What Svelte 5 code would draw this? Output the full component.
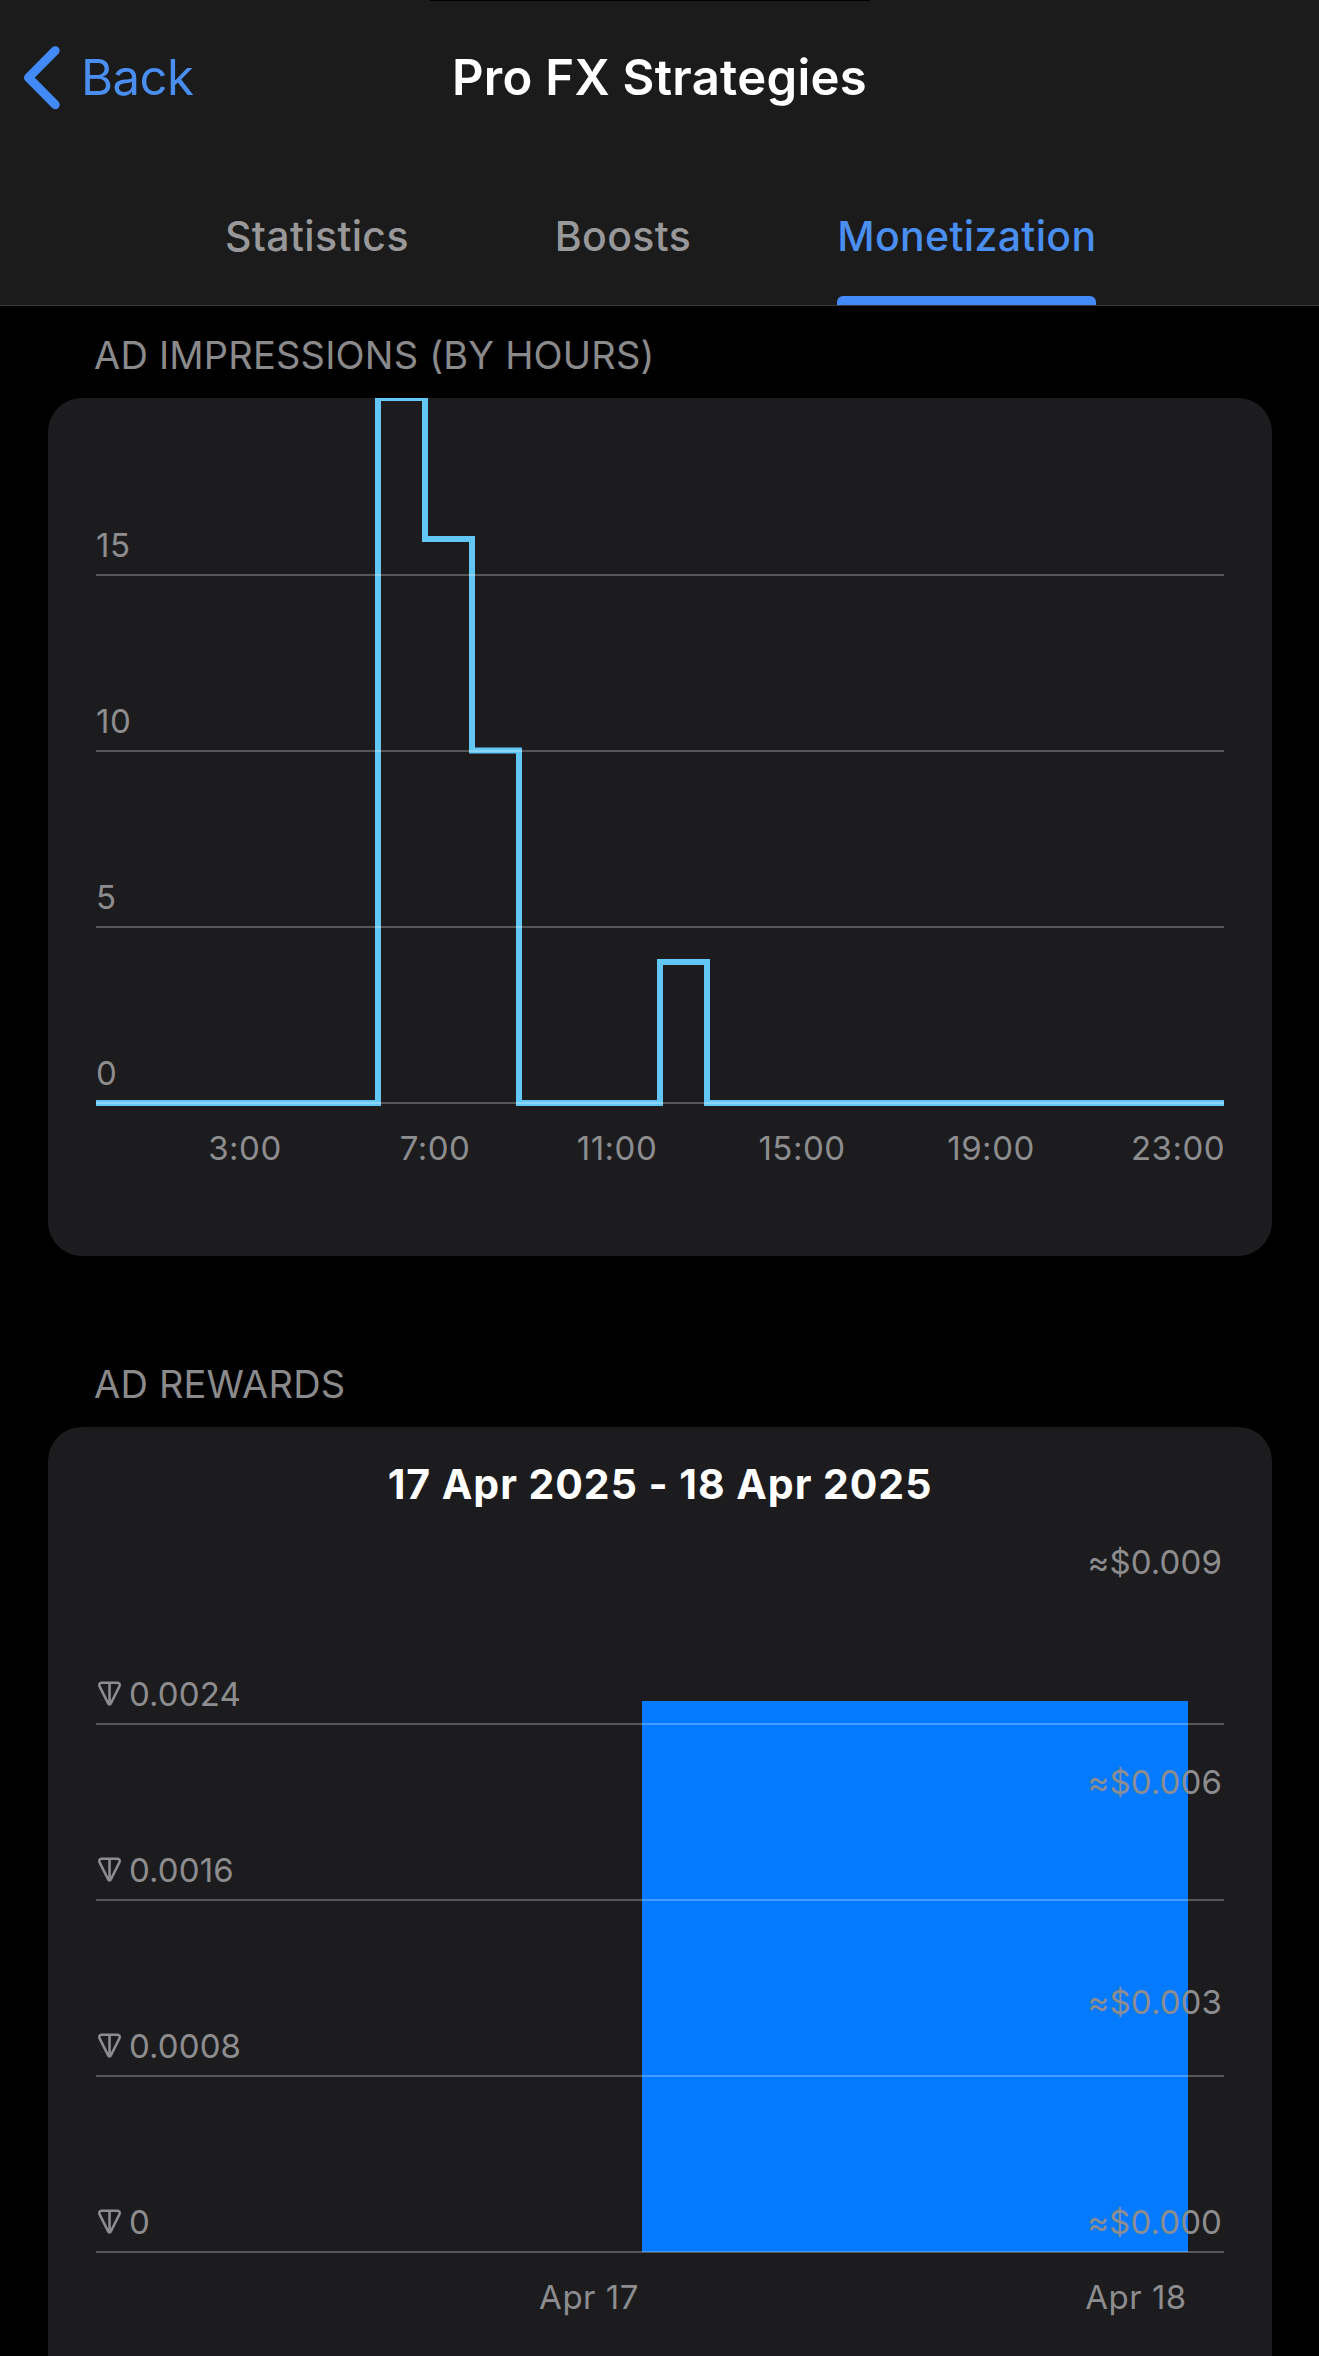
<script lang="ts">
  const tabs = ["Statistics", "Boosts", "Monetization"];
  let active = $state("Monetization");

  // impressions per hour, 0:00 - 23:00
  const hours = [
    0, 0, 0, 0, 0, 0, 20, 16, 10, 0, 0, 0, 4, 0, 0, 0, 0, 0, 0, 0, 0, 0, 0, 0,
  ];
  const hourW = 47;
  const unitH = 35.25;
  const baseY = 705;

  const impressionTicks = [15, 10, 5, 0];
  const hourLabels = [
    { text: "3:00", x: 197 },
    { text: "7:00", x: 387 },
    { text: "11:00", x: 569 },
    { text: "15:00", x: 754 },
    { text: "19:00", x: 943 },
    { text: "23:00", x: 1130 },
  ];

  const tonTicks = ["0.0024", "0.0016", "0.0008", "0"];
  const usdTicks = ["≈$0.009", "≈$0.006", "≈$0.003", "≈$0.000"];

  function stepPath(values: number[]) {
    let d = "";
    values.forEach((v, i) => {
      const y = baseY - v * unitH;
      d += `${i ? "L" : "M"}${48 + i * hourW} ${y}H${48 + (i + 1) * hourW}`;
    });
    return d;
  }
</script>

<div class="screen">
  <header>
    <div class="island"></div>
    <div class="nav">
      <button class="back">
        <svg width="40" height="66" viewBox="0 0 40 66">
          <path d="M33.2 5.7L6.5 32.7L33.2 59.7" />
        </svg>
        <span>Back</span>
      </button>
      <h1>Pro FX Strategies</h1>
    </div>
    <nav class="tabs">
      {#each tabs as tab}
        <button class:active={tab === active} onclick={() => (active = tab)}>
          {tab}
        </button>
      {/each}
    </nav>
  </header>

  <section>
    <h2>AD IMPRESSIONS (BY HOURS)</h2>
    <div class="card">
      <svg class="chart" width="1224" height="858" viewBox="0 0 1224 858">
        <path class="line" d={stepPath(hours)} />
        {#each impressionTicks as tick, i}
          <rect class="grid" x="48" y={176 + i * 176} width="1128" height="2" />
          <text x="48" y={159 + i * 176}>{tick}</text>
        {/each}
        {#each hourLabels as label}
          <text x={label.x} y="762" text-anchor="middle">{label.text}</text>
        {/each}
      </svg>
    </div>
  </section>

  <section class="rewards">
    <h2>AD REWARDS</h2>
    <div class="card">
      <h3>17 Apr 2025 - 18 Apr 2025</h3>
      <svg class="chart" width="1224" height="829" viewBox="0 100 1224 829">
        <rect class="bar" x="594" y="274" width="546" height="551" />
        {#each tonTicks as tick, i}
          <rect class="grid" x="48" y={296 + i * 176} width="1128" height="2" />
          <g class="ton" transform="translate(50 {254.5 + i * 176})">
            <path
              d="M3.6 1.3H19.4C21.3 1.3 22.4 3.2 21.4 4.8L12.8 22C12.2 23.2 10.8 23.2 10.2 22L1.6 4.8C.6 3.2 1.7 1.3 3.6 1.3ZM11.5 1.3V22"
            />
          </g>
          <text class="amount" x="81" y={279 + i * 176}>{tick}</text>
        {/each}
        {#each usdTicks as tick, i}
          <text class="amount" x="1174" y={147 + i * 220} text-anchor="end">{tick}</text>
        {/each}
        <text x="541" y="882" text-anchor="middle">Apr 17</text>
        <text x="1088" y="882" text-anchor="middle">Apr 18</text>
      </svg>
    </div>
  </section>
</div>

<style>
  :global(body) {
    margin: 0;
    background: #000;
  }
  .screen {
    width: 1319px;
    height: 2356px;
    overflow: hidden;
    background: #000;
    color: #8d8d8f;
    font-family: Inter, "Liberation Sans", sans-serif;
  }
  header {
    position: relative;
    box-sizing: border-box;
    height: 306px;
    background: #1b1b1b;
    border-bottom: 1px solid #39393a;
    display: flex;
    flex-direction: column;
  }
  /* bottom edge of the camera cutout */
  .island {
    position: absolute;
    top: 0;
    left: 430px;
    width: 440px;
    height: 1px;
    background: #000;
  }
  button {
    border: 0;
    padding: 0;
    background: none;
    font: inherit;
    color: inherit;
  }
  .nav {
    display: grid;
    grid-template-columns: 1fr auto 1fr;
    align-items: center;
    height: 155px;
  }
  .back {
    display: flex;
    align-items: center;
    gap: 19px;
    padding-left: 22px;
    color: #4a8ef0;
    font-size: 49px;
    letter-spacing: -0.5px;
    line-height: 60px;
  }
  .back path {
    fill: none;
    stroke: #428af7;
    stroke-width: 9;
    stroke-linecap: round;
    stroke-linejoin: round;
  }
  h1 {
    margin: 0;
    color: #fff;
    font-size: 49px;
    font-weight: 600;
    letter-spacing: 0.3px;
    line-height: 60px;
  }
  .tabs {
    display: flex;
    gap: 146px;
    height: 150px;
    padding-left: 225px;
  }
  .tabs button {
    position: relative;
    height: 150px;
    padding-top: 12px;
    font-size: 41px;
    font-weight: 500;
    letter-spacing: 0.35px;
    color: #98989a;
  }
  .tabs button.active {
    color: #4a8ef0;
  }
  .tabs button.active::after {
    content: "";
    position: absolute;
    left: 0;
    right: 0;
    bottom: 0;
    height: 9px;
    border-radius: 6px 6px 0 0;
    background: #428af7;
  }
  section {
    padding: 24px 47px 0 48px;
  }
  section.rewards {
    padding-top: 103px;
  }
  h2 {
    margin: 0;
    padding: 1px 0 0 46px;
    height: 67px;
    font-size: 38px;
    font-weight: 400;
    letter-spacing: 0.2px;
    line-height: 48px;
    color: #8a8a8c;
  }
  .card {
    border-radius: 34px;
    background: #1c1c1e;
    overflow: hidden;
  }
  .rewards .card {
    border-radius: 34px 34px 0 0;
    height: 929px;
  }
  h3 {
    margin: 0;
    height: 100px;
    padding-top: 14px;
    box-sizing: border-box;
    text-align: center;
    font-size: 41px;
    font-weight: 700;
    letter-spacing: 0.96px;
    line-height: 86px;
    color: #fff;
  }
  .chart {
    display: block;
  }
  .chart text {
    font-size: 33px;
    letter-spacing: 0.5px;
    fill: #8d8d8f;
  }
  .chart text.amount {
    letter-spacing: 0.1px;
  }
  .line {
    fill: none;
    stroke: #62c7f7;
    stroke-width: 6;
  }
  .grid {
    fill: #fff;
    fill-opacity: 0.26;
  }
  .bar {
    fill: #037aff;
  }
  .ton path {
    fill: none;
    stroke: #8d8d8f;
    stroke-width: 2.6;
  }
</style>
